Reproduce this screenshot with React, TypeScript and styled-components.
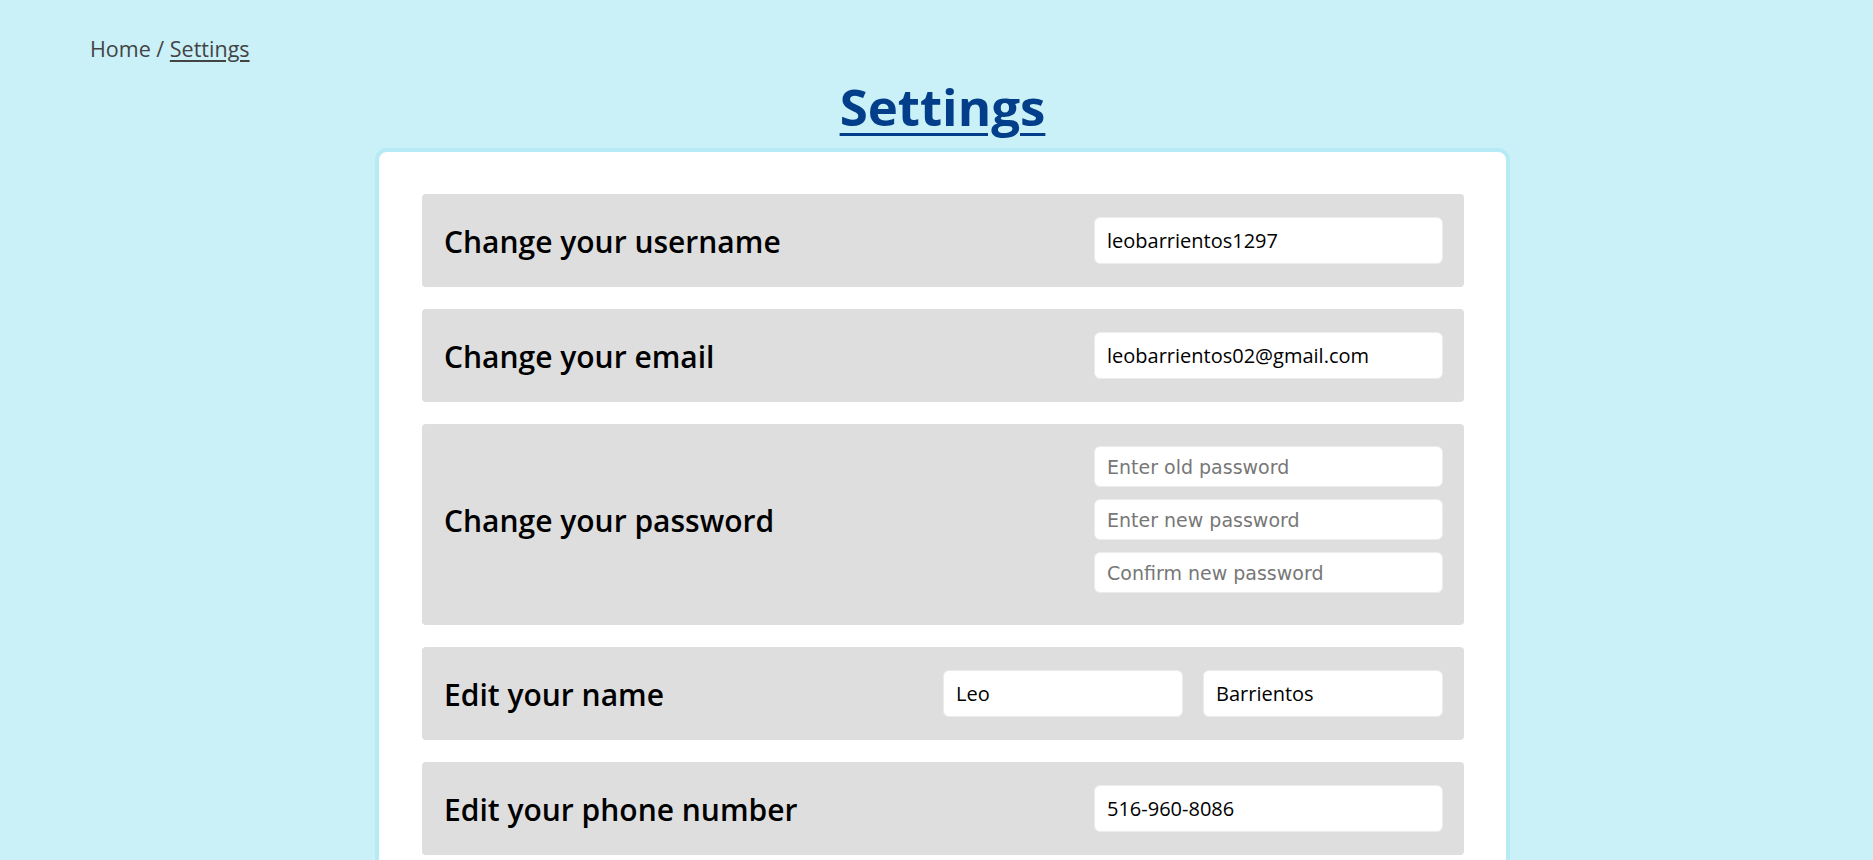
import React from "react";
import styled, { createGlobalStyle } from "styled-components";

const GlobalStyle = createGlobalStyle`
  html, body {
    margin: 0;
    padding: 0;
    background: #caf0f8;
    font-family: "Open Sans", "Noto Sans", sans-serif;
  }
  * { box-sizing: border-box; }
`;

const Page = styled.div`
  min-height: 860px;
  padding: 35px 0 0 0;
`;

const Breadcrumb = styled.nav`
  padding-left: 90px;
  font-size: 21.5px;
  line-height: 28px;
  color: #444;
`;

const CrumbLink = styled.a`
  color: #444;
  text-decoration: underline;
  text-underline-offset: 3px;
`;

const Title = styled.h1`
  margin: 10px 0 0 0;
  padding-left: 12px;
  text-align: center;
  font-size: 51px;
  line-height: 66px;
  font-weight: 700;
  color: #023e8a;
  text-decoration: underline;
  text-decoration-thickness: 3px;
  text-underline-offset: 7px;
`;

const CardWrap = styled.div`
  padding-left: 12px;
  margin-top: 9px;
`;

const Card = styled.section`
  width: 1135px;
  margin: 0 auto;
  background: #fff;
  border: 4px solid #b6ebf5;
  border-radius: 12px;
  padding: 42px 42px 40px 43px;
  display: flex;
  flex-direction: column;
  gap: 22px;
`;

const Row = styled.div<{ $tall?: boolean }>`
  display: flex;
  align-items: center;
  justify-content: space-between;
  background: #dedede;
  border-radius: 4px;
  padding: ${(p) => (p.$tall ? "22px 21px 32px 22px" : "23px 21px 23px 22px")};
`;

const Label = styled.h2`
  margin: 0;
  padding-top: 3px;
  line-height: 40px;
  font-size: 30px;
  font-weight: 600;
  color: #000;
`;

const Fields = styled.div<{ $stack?: boolean }>`
  display: flex;
  flex-direction: ${(p) => (p.$stack ? "column" : "row")};
  gap: ${(p) => (p.$stack ? "12px" : "20px")};
`;

const Input = styled.input<{ $w?: number; $h?: number }>`
  width: ${(p) => p.$w ?? 349}px;
  height: ${(p) => p.$h ?? 47}px;
  background: #fff;
  border: 1px solid #ececec;
  border-radius: 6px;
  padding: 0 12px;
  font-family: "Open Sans", "Noto Sans", sans-serif;
  font-size: 20px;
  font-weight: 500;
  color: #000;
  outline: none;
  &::placeholder {
    font-family: "DejaVu Sans", Verdana, sans-serif;
    font-weight: 400;
    font-size: 19px;
    color: #777;
  }
`;

export default function App() {
  return (
    <>
      <GlobalStyle />
      <Page>
        <Breadcrumb>
          Home / <CrumbLink href="#">Settings</CrumbLink>
        </Breadcrumb>
        <Title>Settings</Title>
        <CardWrap>
          <Card>
            <Row>
              <Label>Change your username</Label>
              <Fields>
                <Input defaultValue="leobarrientos1297" />
              </Fields>
            </Row>
            <Row>
              <Label>Change your email</Label>
              <Fields>
                <Input defaultValue="leobarrientos02@gmail.com" />
              </Fields>
            </Row>
            <Row $tall>
              <Label>Change your password</Label>
              <Fields $stack>
                <Input $h={41} type="password" placeholder="Enter old password" />
                <Input $h={41} type="password" placeholder="Enter new password" />
                <Input $h={41} type="password" placeholder="Confirm new password" />
              </Fields>
            </Row>
            <Row>
              <Label>Edit your name</Label>
              <Fields>
                <Input $w={240} defaultValue="Leo" />
                <Input $w={240} defaultValue="Barrientos" />
              </Fields>
            </Row>
            <Row>
              <Label>Edit your phone number</Label>
              <Fields>
                <Input defaultValue="516-960-8086" />
              </Fields>
            </Row>
          </Card>
        </CardWrap>
      </Page>
    </>
  );
}
